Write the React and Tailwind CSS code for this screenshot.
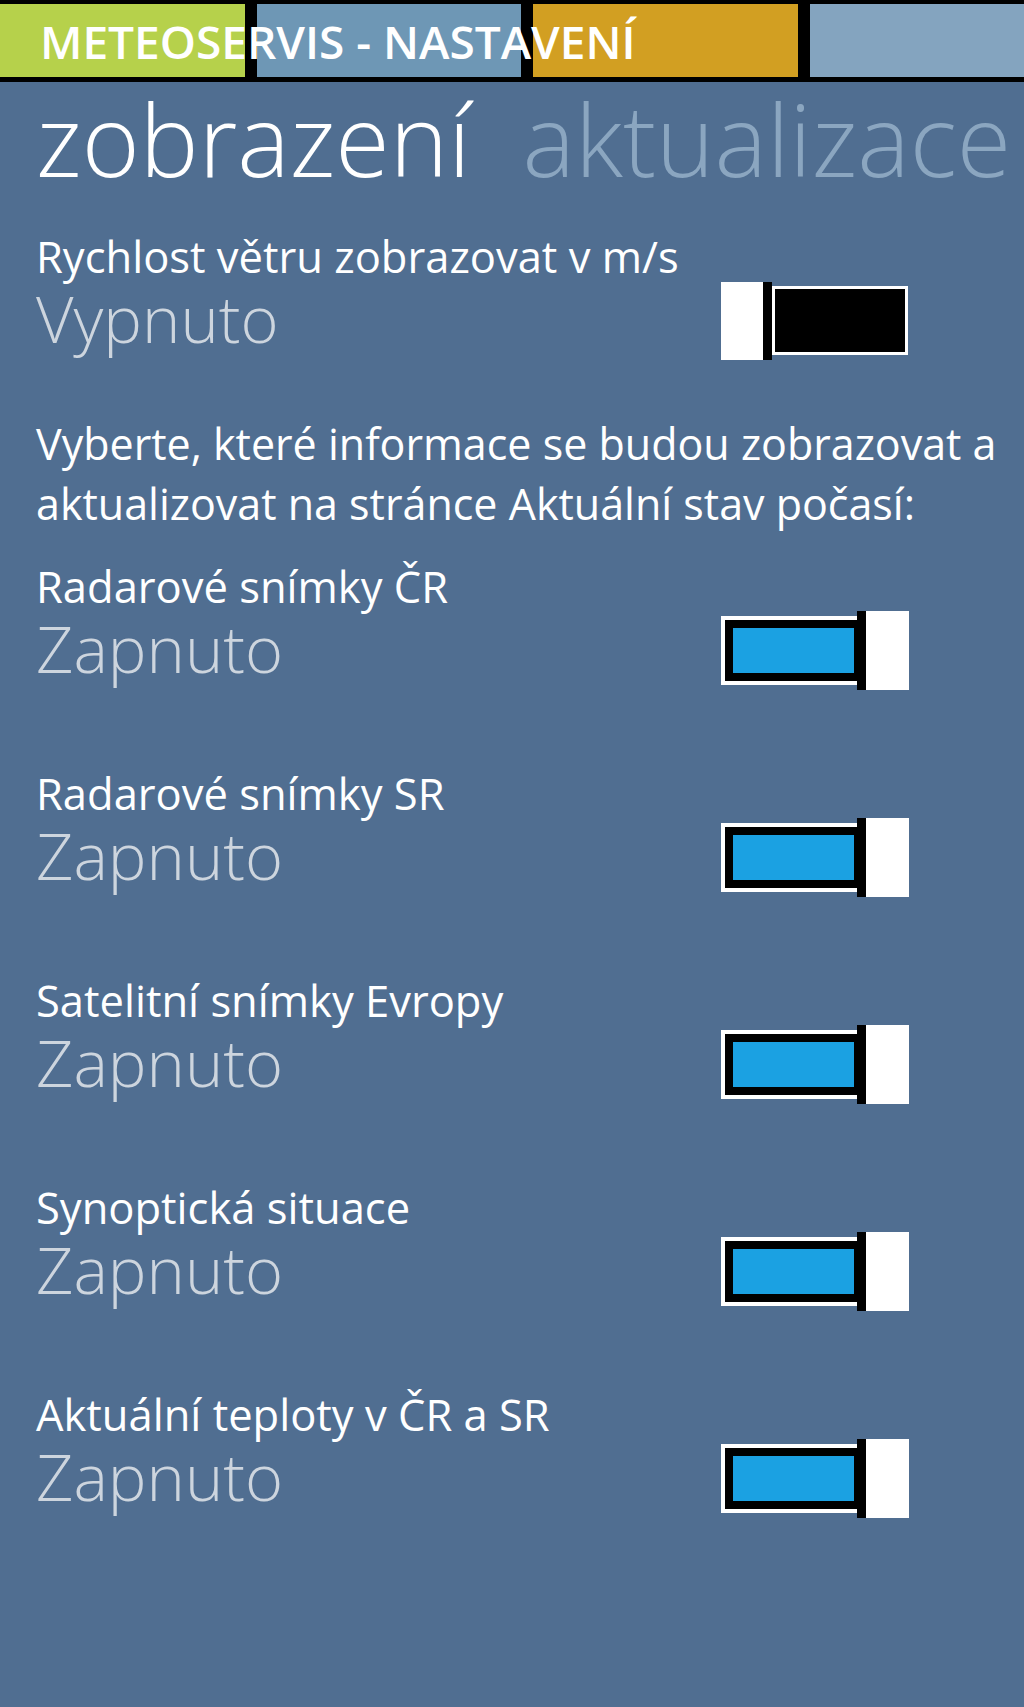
import React from "react";

const font = { fontFamily: '"Open Sans", "Noto Sans", sans-serif' };

function Toggle({ on }) {
  if (on) {
    return (
      <div className="flex items-center h-[79px] w-[188px]">
        <div className="w-[145px] h-[69px] border-[4px] border-white">
          <div className="h-full w-full border-[8px] border-black bg-[#1ba1e2]" />
        </div>
        <div className="relative -ml-[9px] w-[52px] h-[79px] bg-white border-l-[9px] border-black" />
      </div>
    );
  }
  return (
    <div className="flex items-center h-[79px] w-[188px]">
      <div className="w-[51px] h-[78px] bg-white border-r-[9px] border-black" />
      <div className="w-[136px] h-[69px] border-[3px] border-white bg-black" />
    </div>
  );
}

function Setting({ label, value, on }) {
  return (
    <div className="flex items-start justify-between pr-[115px]">
      <div>
        <div className="text-[43.5px] leading-[50px] text-white whitespace-nowrap">{label}</div>
        <div className="text-[65px] leading-[72px] font-light text-[#cdd5de] whitespace-nowrap">{value}</div>
      </div>
      <div className="mt-[49px]">
        <Toggle on={on} />
      </div>
    </div>
  );
}

export default function App() {
  const rows = [
    "Radarové snímky ČR",
    "Radarové snímky SR",
    "Satelitní snímky Evropy",
    "Synoptická situace",
    "Aktuální teploty v ČR a SR",
  ];
  return (
    <div className="w-[1024px] min-h-[1707px] bg-[#506e91] overflow-hidden" style={font}>
      <div className="relative h-[82px] bg-black pt-[4px] pb-[5px] flex gap-[12px]">
        <div className="w-[245px] h-full bg-[#b6d14b]" />
        <div className="w-[264px] h-full bg-[#6e97b5]" />
        <div className="w-[265px] h-full bg-[#d29f22]" />
        <div className="flex-1 h-full bg-[#84a4bf]" />
        <div className="absolute left-[40px] top-[18px] text-[46px] leading-[46px] font-semibold text-white whitespace-nowrap">
          METEOSERVIS - NASTAVENÍ
        </div>
      </div>

      <div className="pl-[36px]">
        <div className="pt-[2px] flex gap-[52px] whitespace-nowrap text-[99px] leading-[110px] font-light">
          <span className="text-white">zobrazení</span>
          <span className="text-[#8ba6c0]">aktualizace</span>
        </div>

        <div className="mt-[38px]">
          <Setting label="Rychlost větru zobrazovat v m/s" value="Vypnuto" on={false} />
        </div>

        <p className="mt-[54px] text-[43px] leading-[60px] text-white whitespace-nowrap">
          Vyberte, které informace se budou zobrazovat a
          <br />
          aktualizovat na stránce Aktuální stav počasí:
        </p>

        <div className="mt-[28px] flex flex-col gap-[79px]">
          {rows.map((r) => (
            <Setting key={r} label={r} value="Zapnuto" on={true} />
          ))}
        </div>
      </div>
    </div>
  );
}
